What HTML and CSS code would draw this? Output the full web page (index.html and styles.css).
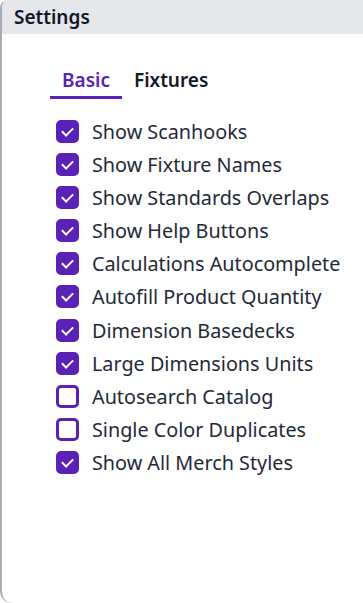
FILE: index.html
```html
<!DOCTYPE html>
<html lang="en">
<head>
    <meta charset="UTF-8">
    <meta name="viewport" content="width=device-width, initial-scale=1.0">
    <title>Settings</title>
    <link rel="stylesheet" href="styles.css">
</head>
<body>
    <div class="settings-panel">
        <div class="panel-header">
            <h2 class="panel-title">Settings</h2>
        </div>

        <div class="panel-body">
            <div class="tabs">
                <button class="tab active">Basic</button>
                <button class="tab">Fixtures</button>
            </div>

            <div class="option-list">
                <label class="option"><input type="checkbox" checked><span class="box"></span>Show Scanhooks</label>
                <label class="option"><input type="checkbox" checked><span class="box"></span>Show Fixture Names</label>
                <label class="option"><input type="checkbox" checked><span class="box"></span>Show Standards Overlaps</label>
                <label class="option"><input type="checkbox" checked><span class="box"></span>Show Help Buttons</label>
                <label class="option"><input type="checkbox" checked><span class="box"></span>Calculations Autocomplete</label>
                <label class="option"><input type="checkbox" checked><span class="box"></span>Autofill Product Quantity</label>
                <label class="option"><input type="checkbox" checked><span class="box"></span>Dimension Basedecks</label>
                <label class="option"><input type="checkbox" checked><span class="box"></span>Large Dimensions Units</label>
                <label class="option"><input type="checkbox"><span class="box"></span>Autosearch Catalog</label>
                <label class="option"><input type="checkbox"><span class="box"></span>Single Color Duplicates</label>
                <label class="option"><input type="checkbox" checked><span class="box"></span>Show All Merch Styles</label>
            </div>
        </div>
    </div>
</body>
</html>
```

FILE: styles.css
```css
* {
    margin: 0;
    padding: 0;
    box-sizing: border-box;
}

body {
    font-family: 'Noto Sans', 'Open Sans', sans-serif;
    background: #ffffff;
    color: #111827;
    height: 603px;
    overflow: hidden;
}

.settings-panel {
    height: 603px;
    border-left: 2px solid #a9adb5;
    border-radius: 8px 0 0 12px;
    overflow: hidden;
    display: flex;
    flex-direction: column;
}

.panel-header {
    background: #e5e7eb;
    height: 34px;
    padding: 0 12px;
    display: flex;
    align-items: center;
}

.panel-title {
    font-size: 19px;
    font-weight: 600;
    color: #111827;
}

.panel-body {
    padding: 33px 0 0 48px;
}

.tabs {
    display: flex;
    margin-bottom: 20px;
}

.tab {
    background: none;
    border: none;
    border-bottom: 3px solid transparent;
    font-family: inherit;
    font-size: 19px;
    line-height: 26px;
    font-weight: 600;
    color: #111827;
    padding: 0 12px 3px;
    cursor: pointer;
}

.tab.active {
    color: #5b21b6;
    border-bottom-color: #5b21b6;
}

.option-list {
    display: flex;
    flex-direction: column;
    gap: 9.2px;
    padding-left: 6px;
}

.option {
    display: flex;
    align-items: center;
    gap: 13px;
    font-size: 19.8px;
    height: 24px;
    color: #1f2937;
    cursor: pointer;
}

.option input {
    display: none;
}

.box {
    width: 23px;
    height: 23px;
    border: 3px solid #5b21b6;
    border-radius: 5px;
    flex-shrink: 0;
    display: flex;
    align-items: center;
    justify-content: center;
}

.option input:checked + .box {
    background: #5b21b6;
}

.option input:checked + .box::after {
    content: "";
    width: 9px;
    height: 5px;
    border-left: 2px solid #ffffff;
    border-bottom: 2px solid #ffffff;
    transform: translateY(-1px) rotate(-45deg);
}
```
